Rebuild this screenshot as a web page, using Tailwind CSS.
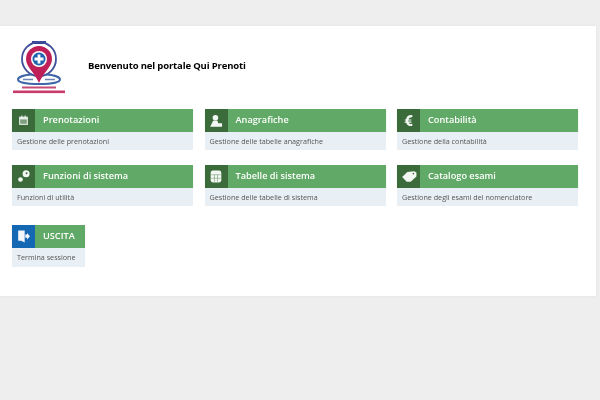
<!DOCTYPE html>
<html lang="it">
<head>
<meta charset="utf-8">
<script src="https://cdn.jsdelivr.net/npm/@tailwindcss/browser@4"></script>
</head>
<body class="w-[600px] h-[400px] overflow-hidden bg-[#eeeeee] font-['Open_Sans',sans-serif]">
<main class="mt-[26px] w-[596px] h-[269.500px] bg-white shadow-[0_0_3px_rgba(0,0,0,0.06)] pl-3 pr-[18px] pt-[12px] blur-[0.6px]">
  <header class="flex items-center h-[60px] ml-[1px]">
    <svg class="w-[52px] h-[58px]" viewBox="0 0 52 58" aria-label="Logo">
      <rect x="19" y="2" width="14" height="3" fill="#2f3f95"/>
      <circle cx="26" cy="20" r="17" fill="none" stroke="#3f4f9a" stroke-width="1.800"/>
      <path d="M26 7a13 13 0 0 1 13 13c0 8-9 14-13 24c-4-10-13-16-13-24a13 13 0 0 1 13-13z" fill="#bf1f58"/>
      <circle cx="26" cy="20" r="8" fill="#fff"/>
      <circle cx="26" cy="20" r="6.500" fill="#1f62b0"/>
      <path d="M24.600 15.500h2.800v3.100h3.100v2.800h-3.100v3.100h-2.800v-3.100h-3.100v-2.800h3.100z" fill="#fff"/>
      <path d="M19 35.500c-8 .5-14 2.500-14 5s7 4.500 21 4.500 21-2 21-4.500-6-4.500-14-5" fill="none" stroke="#3f66a8" stroke-width="2"/>
      <path d="M10 40.500h10M32 40.500h10" stroke="#6f86b5" stroke-width="1.600"/>
      <rect x="9" y="47.500" width="34" height="2" fill="#b81f55" opacity=".8"/>
      <rect x="0" y="51.500" width="52" height="2.600" fill="#c2255c" opacity=".9"/>
    </svg>
    <h1 class="ml-[23px] -mt-[3px] text-[9.5px] font-bold text-black tracking-[-0.15px]">Benvenuto nel portale Qui Prenoti</h1>
  </header>

  <div class="grid grid-cols-3 gap-x-[11.5px] gap-y-[14.5px] mt-[11px]">
    <a class="block">
      <div class="flex h-[23px] bg-[#60a966] shadow-[0_1px_1px_rgba(0,0,0,0.2)]">
        <span class="w-[23px] flex items-center justify-center bg-[#3b6b3a]">
          <svg class="w-[11px] h-[11px]" viewBox="0 0 10 10"><path d="M1 1.500h8v7.500H1z" fill="#e8efe8"/><path d="M2 4h6v4H2z" fill="#7d9f7d"/><path d="M3 .5h1v2H3zM6 .5h1v2H6z" fill="#e8efe8"/></svg>
        </span>
        <span class="pl-[8px] text-[9.2px] font-semibold text-white leading-[21px]">Prenotazioni</span>
      </div>
      <p class="h-[18px] bg-[#e9f0f5] pl-[5px] text-[7.2px] leading-[18px] text-[#555]">Gestione delle prenotazioni</p>
    </a>
    <a class="block">
      <div class="flex h-[23px] bg-[#60a966] shadow-[0_1px_1px_rgba(0,0,0,0.2)]">
        <span class="w-[23px] flex items-center justify-center bg-[#3b6b3a]">
          <svg class="w-[14px] h-[14px]" viewBox="0 0 12 12"><circle cx="5.500" cy="3.200" r="2.400" fill="#f3f7f3"/><path d="M3.500 5.800h3.700l.8 2.200h3.200v3H1l1.500-3z" fill="#f3f7f3"/></svg>
        </span>
        <span class="pl-[8px] text-[9.2px] font-semibold text-white leading-[21px]">Anagrafiche</span>
      </div>
      <p class="h-[18px] bg-[#e9f0f5] pl-[5px] text-[7.2px] leading-[18px] text-[#555]">Gestione delle tabelle anagrafiche</p>
    </a>
    <a class="block">
      <div class="flex h-[23px] bg-[#60a966] shadow-[0_1px_1px_rgba(0,0,0,0.2)]">
        <span class="w-[23px] flex items-center justify-center bg-[#3b6b3a]">
          <svg class="w-[11px] h-[13px]" viewBox="0 0 10 12"><path d="M8.500 1C5 .5 3 2.700 2.700 5H1.500v1h1.100v1H1.500v1h1.400c.6 2.400 3 3.500 5.600 3V9C7 9.400 5.700 9 5.200 8h2.500V7H4.800V6h2.900V5H5.100c.4-1.500 1.800-2.200 3.400-1.900z" fill="#f3f7f3"/></svg>
        </span>
        <span class="pl-[8px] text-[9.2px] font-semibold text-white leading-[21px]">Contabilità</span>
      </div>
      <p class="h-[18px] bg-[#e9f0f5] pl-[5px] text-[7.2px] leading-[18px] text-[#555]">Gestione della contabilità</p>
    </a>
    <a class="block">
      <div class="flex h-[23px] bg-[#60a966] shadow-[0_1px_1px_rgba(0,0,0,0.2)]">
        <span class="w-[23px] flex items-center justify-center bg-[#3b6b3a]">
          <svg class="w-[14px] h-[14px]" viewBox="0 0 12 12"><circle cx="7.800" cy="4" r="3" fill="#f3f7f3"/><circle cx="8.200" cy="3.600" r=".8" fill="#3b6b3a"/><circle cx="3" cy="9" r="2" fill="#f3f7f3"/></svg>
        </span>
        <span class="pl-[8px] text-[9.2px] font-semibold text-white leading-[21px]">Funzioni di sistema</span>
      </div>
      <p class="h-[18px] bg-[#e9f0f5] pl-[5px] text-[7.2px] leading-[18px] text-[#555]">Funzioni di utilità</p>
    </a>
    <a class="block">
      <div class="flex h-[23px] bg-[#60a966] shadow-[0_1px_1px_rgba(0,0,0,0.2)]">
        <span class="w-[23px] flex items-center justify-center bg-[#3b6b3a]">
          <svg class="w-[12px] h-[13px]" viewBox="0 0 10 11"><rect x=".5" y=".5" width="9" height="10" rx="1.800" fill="#f3f7f3"/><path d="M1 4h8M1 7h8M3.700 4v6M6.300 4v6" stroke="#8aa88a" stroke-width=".6"/></svg>
        </span>
        <span class="pl-[8px] text-[9.2px] font-semibold text-white leading-[21px]">Tabelle di sistema</span>
      </div>
      <p class="h-[18px] bg-[#e9f0f5] pl-[5px] text-[7.2px] leading-[18px] text-[#555]">Gestione delle tabelle di sistema</p>
    </a>
    <a class="block">
      <div class="flex h-[23px] bg-[#60a966] shadow-[0_1px_1px_rgba(0,0,0,0.2)]">
        <span class="w-[23px] flex items-center justify-center bg-[#3b6b3a]">
          <svg class="w-[16px] h-[13px]" viewBox="0 0 14 11"><path d="M1 6l4.500-4.500 6-.5 2 1v3.500l-5 4.500H5z" fill="#f3f7f3"/><circle cx="10.800" cy="3" r=".7" fill="#3b6b3a"/></svg>
        </span>
        <span class="pl-[8px] text-[9.2px] font-semibold text-white leading-[21px]">Catalogo esami</span>
      </div>
      <p class="h-[18px] bg-[#e9f0f5] pl-[5px] text-[7.2px] leading-[18px] text-[#555]">Gestione degli esami del nomenclatore</p>
    </a>
  </div>

  <a class="block w-[73px] mt-[19.500px]">
    <div class="flex h-[23px] bg-[#60a966] shadow-[0_1px_1px_rgba(0,0,0,0.2)]">
      <span class="w-[23px] flex items-center justify-center bg-[#1467b3]">
        <svg class="w-[13px] h-[13px]" viewBox="0 0 11 11"><path d="M1 .5h5.500v10L3.500 9H1z" fill="#f3f7fb"/><path d="M7 3.800h1.500V2.500L11 5.200 8.500 8V6.600H7z" fill="#f3f7fb"/></svg>
      </span>
      <span class="pl-[8px] text-[9.2px] font-semibold text-white leading-[21px]">USCITA</span>
    </div>
    <p class="h-[19px] bg-[#e9f0f5] pl-[5px] text-[7.2px] leading-[19px] text-[#555]">Termina sessione</p>
  </a>
</main>
</body>
</html>
